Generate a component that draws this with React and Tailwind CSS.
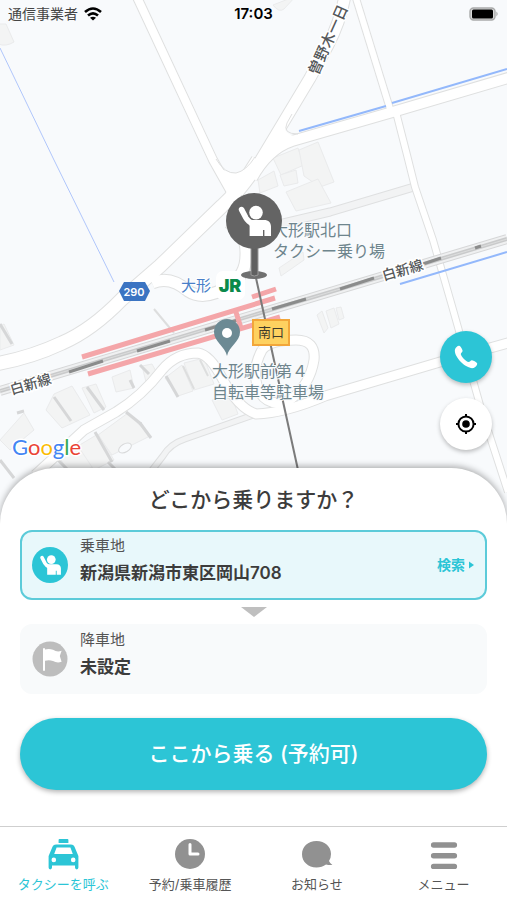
import React from "react";

function PersonShape() {
  return (
    <>
      <path d="M15.6 16.6 L20 25 Q22 28.6 27 31" fill="none" stroke="#fff" strokeWidth="5.6" strokeLinecap="round" />
      <path
        d="M22 27 L38 27 C42.6 27 45 29.6 45 33.6 L45 43 L38.4 43 L38.4 37 L37 37 L37 43 L23.6 43 L23.6 33 Z"
        fill="#fff"
      />
      <circle cx="30" cy="19.6" r="6.8" fill="#fff" />
    </>
  );
}

const roads = [
  { d: "M136 -5 L213 160 L231 192", w: 8 },
  { d: "M345 -5 Q341 20 328 45 L310 78 L262 158 Q256 170 238 192", w: 11 },
  { d: "M515 76 L396 111 L292 141 Q268 149 252 178", w: 10 },
  { d: "M258 160 Q240 190 222 206 L160 266 L122 299 Q92 330 62 343 Q30 358 -5 364", w: 13 },
  { d: "M355 -5 L391 112", w: 6 },
  { d: "M396 112 L407 155 L415 187 L433 240 L452 306 L463 345 L482 412 L508 492", w: 6 },
  { d: "M228 222 Q247 232 246 255 Q246 275 230 285 Q205 302 188 291 Q170 275 152 283", w: 11 },
  { d: "M515 341 L440 362 L325 396 Q285 413 256 414 Q238 408 222 378 Q210 355 198 353 Q176 353 162 370 Q142 396 116 412 L84 430 L35 475", w: 9 },
  { d: "M262 350 Q270 340 296 340 Q316 340 314 360 Q310 385 290 400 Q270 408 260 393 Q250 372 262 350", w: 9 },
];

const lanes = [
  { d: "M414 187 L330 212 L262 228", w: 8 },
  { d: "M256 414 L185 439 Q170 444 163 456 L146 478", w: 6 },
];

const buildings = [
  "M273 158 L298 148 L304 165 L281 175 Z",
  "M299 150 L318 142 L334 182 L320 187 L304 176 Z",
  "M258 180 L274 171 L278 186 L260 193 Z",
  "M286 192 L318 179 L331 203 L296 211 Z",
  "M280 175 L296 170 L298 183 L284 186 Z",
  "M279 268 L303 252 L304 260 L281 276 Z",
  "M317 315 L322 311 L328 328 L324 333 Z",
  "M326 311 L334 308 L339 324 L331 328 Z",
  "M336 308 L341 307 L344 318 L339 320 Z",
  "M273 5 L296 -4 L284 9 Q279 13 273 5 Z",
  "M-2 24 L6 24 L14 42 Q6 47 -2 44 Z",
  "M0 326 L4 324 L14 345 L0 350 Z",
  "M54 394 L72 386 L90 415 L62 428 L46 410 Z",
  "M82 388 L96 384 L106 407 L94 413 Z",
  "M112 377 L130 370 L134 388 L116 392 Z",
  "M142 366 L152 364 L158 375 L146 382 Z",
  "M165 378 L178 396 L193 391 L182 365 Z",
  "M184 363 L204 358 L214 384 L194 390 Z",
  "M212 400 L232 398 L238 414 L222 420 Z",
  "M98 435 L128 413 L150 436 L112 455 Z",
  "M60 458 L82 447 L94 466 L72 478 Z",
  "M0 440 L24 413 L34 430 L10 450 Z",
  "M78 446 L98 434 L114 460 L94 470 Z",
];

const shades = [
  "M54 397 L71 421", "M87 387 L104 410", "M140 365 L149 374", "M130 380 L134 388",
  "M166 376 L178 397", "M0 324 L12 344", "M95 432 L112 462", "M126 412 L141 424",
  "M140 423 L151 438", "M0 460 L14 478", "M54 456 L68 470", "M108 462 L116 470",
  "M17 413 L24 411",
];

const edges = ["M183 366 L194 389", "M200 360 L208 376", "M154 309 L174 333"];

const dashes = [
  "M69 372 L103 361", "M137 351 L170 341", "M205 330 L238 320", "M272 309 L306 299",
  "M340 289 L374 278", "M423 264 L441 258", "M475 248 L481 246",
];

function TownMap() {
  return (
    <svg
      className="absolute inset-0 h-full w-full font-['Noto_Sans_CJK_JP',sans-serif]"
      viewBox="0 0 507 528"
      preserveAspectRatio="xMidYMid slice"
      role="img"
      aria-label="大形駅周辺の地図"
    >
      <rect width="507" height="528" fill="#f8fafc" />
      <g fill="#f3f4f4" stroke="#eaebec" strokeWidth="1">
        {buildings.map((d) => <path key={d} d={d} />)}
      </g>
      <g stroke="#d6d7d8" strokeWidth="3">
        {shades.map((d) => <path key={d} d={d} />)}
      </g>
      <g stroke="#dddede" strokeWidth="2">
        {edges.map((d) => <path key={d} d={d} />)}
      </g>
      <g fill="none" strokeLinejoin="round">
        {lanes.map((r) => <path key={r.d} d={r.d} stroke="#dfe0e1" strokeWidth={r.w + 1} />)}
        {lanes.map((r) => <path key={r.d + "f"} d={r.d} stroke="#f2f3f4" strokeWidth={r.w - 1} />)}
        {roads.map((r) => <path key={r.d} d={r.d} stroke="#dfe0e0" strokeWidth={r.w + 2} />)}
        {roads.map((r) => <path key={r.d + "f"} d={r.d} stroke="#fff" strokeWidth={r.w} />)}
        <path d="M292 112 L286 124 Q283 133 294 136 L286 146 L262 160 Z" fill="#fff" />
        <path d="M292 114 L287 123 Q282 134 298 134" stroke="#dfe0e0" />
        <path d="M215 160 Q224 175 236 173 Q246 171 254 159 L262 168 L236 200 L222 200 L228 190 Z" fill="#fff" />
        <path d="M216 159 Q225 174 236 173 Q246 171 255 157" stroke="#dfe0e0" />
      </g>
      <ellipse cx="125" cy="448" rx="7" ry="4" transform="rotate(-30 125 448)" fill="#f8fafc" stroke="#d8d9da" />

      <g fill="none">
        <path d="M0 48 L54 160 L114 282" stroke="#b0c6fb" strokeWidth="1" />
        <path d="M299 131 L386 106 M392 103 L507 69" stroke="#93b8fb" strokeWidth="2" />
        <path d="M400 284 L507 252" stroke="#93b8fb" strokeWidth="2" />
      </g>

      <g fill="none">
        <path d="M0 391 L507 239" stroke="#d6d7d8" strokeWidth="10" />
        <path d="M0 391 L507 239" stroke="#eff0f1" strokeWidth="8" />
        <path d="M0 391 L507 239" stroke="#c9cacb" strokeWidth="4" />
        <path d="M0 391 L507 239" stroke="#dcdddd" strokeWidth="1" />
        {dashes.map((d) => <path key={d} d={d} stroke="#8b8c8c" strokeWidth="3" />)}
        <path d="M82 357 L275 298 M252 297 L276 289 M88 374 L280 317 M235 309 L241 328" stroke="#f4a6a9" strokeWidth="5" />
      </g>

      <path d="M256 278 L298 470" stroke="#7b7b7b" strokeWidth="2" />

      <g fontSize="14" fill="#55585a" stroke="#fff" strokeWidth="3" paintOrder="stroke" textAnchor="middle" fontWeight="500">
        <text transform="translate(32 389) rotate(-16)">白新線</text>
        <text transform="translate(404 275) rotate(-16)">白新線</text>
        <text fontSize="15" transform="translate(333 42) rotate(-66)">曽野木一日</text>
      </g>

      <path d="M124 282 H145 L150 291 L145 301 H124 L119 291 Z" fill="#3b74c2" />
      <text x="134" y="296" fontSize="11" fontWeight="600" fill="#fff" textAnchor="middle" className="font-['Inter',sans-serif]">290</text>

      <text x="181" y="291" fontSize="15" fill="#4a7fc8" stroke="#fff" strokeWidth="2" paintOrder="stroke">大形</text>
      <rect x="216" y="271" width="29" height="29" rx="7" fill="#fff" />
      <text x="230" y="292" fontSize="18" fontWeight="900" fill="#0b8a4b" textAnchor="middle" className="font-['Inter',sans-serif]">JR</text>

      <g fontSize="16" fill="#6e858d" stroke="#f8fafc" strokeWidth="2" paintOrder="stroke">
        <text x="272" y="236">大形駅北口</text>
        <text x="273" y="257">タクシー乗り場</text>
        <text x="212" y="377">大形駅前第４</text>
        <text x="212" y="398">自転車等駐車場</text>
      </g>

      <path d="M227 356 C225 346 214 342 214 332 A13 13 0 0 1 240 332 C240 342 229 346 227 356 Z" fill="#6c8a94" />
      <circle cx="227" cy="333" r="5" fill="#fff" />

      <rect x="253" y="320" width="36" height="25" fill="#fed160" stroke="#f2a63a" strokeWidth="2" />
      <text x="271" y="337" fontSize="13" fill="#3f3a2b" textAnchor="middle">南口</text>

      <ellipse cx="254" cy="275" rx="13" ry="4" fill="#707070" />
      <path d="M251 245 H258 V275 Q254 277 251 275 Z" fill="#606060" stroke="#9a9a9a" strokeWidth="1" />
      <circle cx="254" cy="221" r="28" fill="#646464" />
      <g transform="translate(226 193)"><PersonShape /></g>

      <text x="12" y="455" fontSize="22" stroke="#fff" strokeWidth="3" paintOrder="stroke" className="font-['Lato',sans-serif]">
        <tspan fill="#4285f4">G</tspan>
        <tspan fill="#ea4335">o</tspan>
        <tspan fill="#fbbc05">o</tspan>
        <tspan fill="#4285f4">g</tspan>
        <tspan fill="#34a853">l</tspan>
        <tspan fill="#ea4335">e</tspan>
      </text>
    </svg>
  );
}

function StatusBar() {
  return (
    <header className="relative grid h-7 grid-cols-3 items-center px-2 text-sm text-black">
      <div className="flex items-center gap-1.5 text-[#444]">
        <span>通信事業者</span>
        <svg width="18" height="14" viewBox="0 0 18 14" fill="none" stroke="#000" strokeWidth="2.6" aria-hidden="true">
          <path d="M1 5 Q9 -2 17 5" />
          <path d="M4 8.6 Q9 4.2 14 8.6" />
          <path d="M9 13.6 L6 10.8 Q9 8.6 12 10.8 Z" fill="#000" stroke="none" />
        </svg>
      </div>
      <time className="text-center text-[15px] font-semibold">17:03</time>
      <svg className="justify-self-end" width="30" height="14" viewBox="0 0 30 14" aria-hidden="true">
        <rect x="1" y="1" width="25" height="12" rx="3.5" fill="#d9dada" stroke="#a9aaaa" strokeWidth="1.4" />
        <rect x="3" y="2.6" width="21" height="8.8" rx="1.5" fill="#000" />
        <path d="M27.4 4.6 Q30 7 27.4 9.4 Z" fill="#a9aaaa" />
      </svg>
    </header>
  );
}

function PlaceCard({ label, value, active, icon }) {
  return (
    <button
      type="button"
      className={
        active
          ? "flex h-[70px] w-full items-center gap-3 rounded-xl border-2 border-[#5ccbd9] bg-[#e8f8fb] px-2.5 text-left"
          : "flex h-[70px] w-full items-center gap-3 rounded-xl border-2 border-[#f8fafb] bg-[#f8fafb] px-2.5 text-left"
      }
    >
      {icon}
      <span className="flex flex-1 flex-col self-start pt-1">
        <span className="text-[15px] leading-5 text-[#555]">{label}</span>
        <span className="text-[17px] leading-[34px] font-semibold text-[#3c3c3c]">{value}</span>
      </span>
      {active && (
        <span className="flex items-center gap-1 text-sm font-semibold text-[#2cc5d6]">
          検索
          <svg width="6" height="8" viewBox="0 0 6 8" fill="currentColor" aria-hidden="true"><path d="M0 0.5 L5 4 L0 7.5 Z" /></svg>
        </span>
      )}
    </button>
  );
}

function TaxiIcon() {
  return (
    <svg width="32" height="32" viewBox="0 0 32 32" aria-hidden="true">
      <path fill="#2cc5d6" fillRule="evenodd" d="M12.5 0 H20.5 Q21.4 0 21.4 1 V4 H11.6 V1 Q11.6 0 12.5 0 Z M9 5.4 H24 Q26.6 5.4 27.4 7.6 L31.4 17 V28.6 Q31.4 30.4 29.8 30.4 Q28 30.4 28 28.6 V26.4 H5 V28.6 Q5 30.4 3.2 30.4 Q1.6 30.4 1.6 28.6 V17 L5.6 7.6 Q6.4 5.4 9 5.4 Z M9.6 8.4 L7.2 15 H25.8 L23.4 8.4 Z M6.8 18.6 A2.3 2.3 0 1 0 6.8 23.2 A2.3 2.3 0 1 0 6.8 18.6 Z M26.2 18.6 A2.3 2.3 0 1 0 26.2 23.2 A2.3 2.3 0 1 0 26.2 18.6 Z" />
    </svg>
  );
}

function ClockIcon() {
  return (
    <svg width="32" height="32" viewBox="0 0 32 32" aria-hidden="true">
      <circle cx="16" cy="15" r="15" fill="#919191" />
      <path d="M16 5.4 V15 H24" fill="none" stroke="#fff" strokeWidth="3" strokeLinecap="round" strokeLinejoin="round" />
    </svg>
  );
}

function BubbleIcon() {
  return (
    <svg width="32" height="32" viewBox="0 0 32 32" aria-hidden="true">
      <path fill="#919191" d="M15.5 2 C24 2 30 7.6 30 15 Q30 19 28 22 Q29 24.4 31.4 26 Q27.6 26.2 25 25.4 Q21 28.4 15.5 28.4 C7 28.4 1 22.6 1 15.2 C1 7.6 7 2 15.5 2 Z" />
    </svg>
  );
}

function BarsIcon() {
  return (
    <svg width="32" height="32" viewBox="0 0 32 32" aria-hidden="true">
      <path d="M5.6 6 H26.4 M5.6 16.8 H26.4 M5.6 27.4 H26.4" stroke="#919191" strokeWidth="5.4" strokeLinecap="round" />
    </svg>
  );
}

const tabs = [
  { name: "タクシーを呼ぶ", Icon: TaxiIcon, current: true },
  { name: "予約/乗車履歴", Icon: ClockIcon },
  { name: "お知らせ", Icon: BubbleIcon },
  { name: "メニュー", Icon: BarsIcon },
];

export default function App() {
  return (
    <div className="flex min-h-screen flex-col overflow-hidden bg-white font-['Inter','Noto_Sans_CJK_JP',sans-serif]">
      <section className="relative min-h-[500px] flex-1">
        <TownMap />
        <StatusBar />
        <div className="absolute right-[15px] bottom-[78px] flex flex-col gap-[15px]">
          <button type="button" aria-label="電話" className="flex size-[52px] items-center justify-center rounded-full bg-[#2cc5d6] shadow-[0_2px_4px_rgba(0,0,0,0.25)]">
            <svg width="24" height="24" viewBox="0 0 24 24" fill="#fff" aria-hidden="true">
              <path d="M1 4.4 C1.6 2.6 3.6 0.6 5.2 0.8 C6.8 1.2 8.4 4.4 8.6 5.8 C8.6 7.4 6.8 8 6.8 9.2 C7.4 11.8 12 16.6 14.6 17 C16 17 16.4 15.2 18 15.2 C19.6 15.4 22.8 17.2 23.2 18.6 C23.4 20.4 21.4 22.4 19.6 23 C12.4 24.6 -0.8 11.6 1 4.4 Z" />
            </svg>
          </button>
          <button type="button" aria-label="現在地" className="flex size-[52px] items-center justify-center rounded-full bg-white shadow-[0_2px_4px_rgba(0,0,0,0.25)]">
            <svg width="22" height="22" viewBox="0 0 22 22" fill="none" stroke="#000" strokeWidth="2" aria-hidden="true">
              <circle cx="11" cy="11" r="7.6" />
              <circle cx="11" cy="11" r="3.8" fill="#000" stroke="none" />
              <path d="M11 1 V4 M11 18 V21 M1 11 H4 M18 11 H21" />
            </svg>
          </button>
        </div>
      </section>

      <main className="relative -mt-15 rounded-t-[56px] bg-white px-5 pt-4 pb-9 shadow-[0_-2px_6px_rgba(0,0,0,0.3)]">
        <h1 className="text-center text-[21px] leading-8 font-medium text-[#3c3c3c]">どこから乗りますか？</h1>
        <div className="mt-3.5 flex flex-col items-center">
          <PlaceCard
            active
            label="乗車地"
            value="新潟県新潟市東区岡山708"
            icon={
              <svg width="36" height="36" viewBox="0 0 56 56" aria-hidden="true">
                <circle cx="28" cy="28" r="28" fill="#2cc5d6" />
                <PersonShape />
              </svg>
            }
          />
          <svg className="my-[7px]" width="26" height="10" viewBox="0 0 26 10" aria-hidden="true">
            <path d="M0 0 H26 L13 10 Z" fill="#bfbfbf" />
          </svg>
          <PlaceCard
            label="降車地"
            value="未設定"
            icon={
              <svg width="36" height="36" viewBox="0 0 36 36" aria-hidden="true">
                <circle cx="18" cy="18" r="17.5" fill="#bdbdbd" />
                <path d="M12 8 V29" stroke="#fff" strokeWidth="2" strokeLinecap="round" />
                <path d="M13 8.6 Q17 7.2 21 8.8 Q25 11.4 29.6 9.8 L27.8 15 L29.6 20.8 Q25 22.4 21 20 Q17 18.4 13 19.8 Z" fill="#fff" />
              </svg>
            }
          />
        </div>
        <button type="button" className="mt-6 h-[72px] w-full rounded-full bg-[#2cc5d6] text-[21px] font-medium text-white shadow-[0_2px_5px_rgba(0,0,0,0.3)]">
          ここから乗る (予約可)
        </button>
      </main>

      <nav className="relative grid h-[74px] grid-cols-4 border-t border-[#cfcfcf] bg-white pt-3">
        {tabs.map(({ name, Icon, current }) => (
          <a
            key={name}
            href="#"
            aria-current={current ? "page" : undefined}
            className={
              current
                ? "flex flex-col items-center gap-[3px] text-[13px] leading-5 whitespace-nowrap text-[#2cc5d6]"
                : "flex flex-col items-center gap-[3px] text-[13px] leading-5 whitespace-nowrap text-[#555]"
            }
          >
            <Icon />
            {name}
          </a>
        ))}
      </nav>
    </div>
  );
}
